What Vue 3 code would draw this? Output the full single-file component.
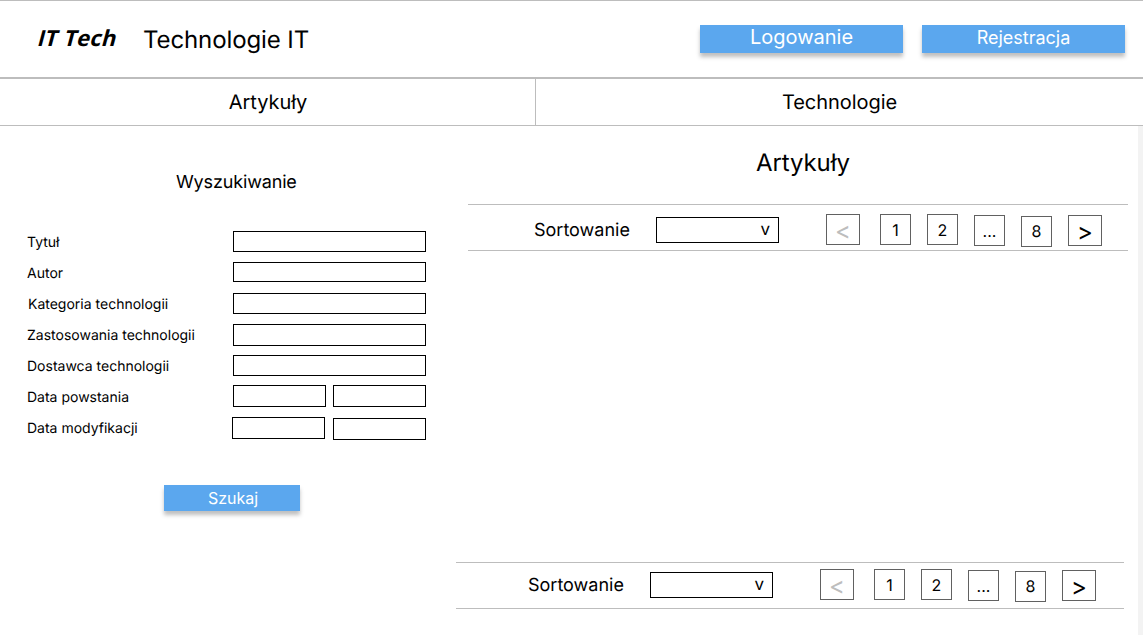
<script setup>
const fields = [
  { label: 'Tytuł', inputs: ['h21'] },
  { label: 'Autor', inputs: ['h20'] },
  { label: 'Kategoria technologii', inputs: ['h21'], indent: true },
  { label: 'Zastosowania technologii', inputs: ['h22'] },
  { label: 'Dostawca technologii', inputs: ['h21'] },
  { label: 'Data powstania', inputs: ['h22 raised', 'h22 raised'] },
  { label: 'Data modyfikacji', inputs: ['h22 wider', 'h22 lowered'] }
]
const pages = [
  { text: '<', kind: 'arrow prev' },
  { text: '1', kind: 'first' },
  { text: '2', kind: 'second' },
  { text: '...', kind: 'dots' },
  { text: '8', kind: 'last' },
  { text: '>', kind: 'arrow next' }
]
const toolbars = ['upper', 'lower']
</script>

<template>
  <div class="page">
    <header class="header">
      <div class="logo"><span class="mark"><span class="plain">I</span>T Tech</span></div>
      <h1 class="title">Technologie IT</h1>
      <button class="btn login"><span>Logowanie</span></button>
      <button class="btn register"><span>Rejestracja</span></button>
    </header>
    <nav class="nav">
      <a class="tab articles">Artykuły</a>
      <a class="tab technologies">Technologie</a>
    </nav>
    <main class="content">
      <aside class="search">
        <h2 class="search-title">Wyszukiwanie</h2>
        <form class="form">
          <div v-for="f in fields" :key="f.label" class="row">
            <label :class="{ indent: f.indent }">{{ f.label }}</label>
            <div class="inputs">
              <div v-for="(c, i) in f.inputs" :key="i" class="input" :class="c"></div>
            </div>
          </div>
        </form>
        <button class="btn submit"><span>Szukaj</span></button>
      </aside>
      <section class="results">
        <h2 class="results-title">Artykuły</h2>
        <div v-for="t in toolbars" :key="t" class="toolbar" :class="t">
          <span class="sort">Sortowanie</span>
          <div class="select"><span>v</span></div>
          <div class="pager">
            <div v-for="p in pages" :key="p.text" class="pg" :class="p.kind"><span>{{ p.text }}</span></div>
          </div>
        </div>
      </section>
      <div class="scroll"></div>
    </main>
  </div>
</template>

<style>
body { margin: 0; background: #fff; overflow: hidden; }
</style>

<style scoped>
* { box-sizing: border-box; }
.page {
  width: 1143px; height: 635px; display: flex; flex-direction: column;
  font-family: Inter, sans-serif; color: #000; overflow: hidden; background: #fff;
  text-rendering: geometricPrecision;
}
h1, h2 { margin: 0; font-weight: 400; }
.header {
  height: 79px; flex: none; display: flex; align-items: flex-start;
  border-top: 1px solid #bdbdbd; border-bottom: 2px solid #bdbdbd; padding-left: 39px;
}
.logo {
  width: 104px; margin-top: 22px; white-space: nowrap;
  font: 700 22px/30px "Open Sans", sans-serif; letter-spacing: .3px;
}
.mark { display: inline-block; transform: skewX(-15deg); }
.plain { font-family: Roboto, sans-serif; line-height: 20px; }
.title { width: 557px; margin-top: 24px; font-size: 24px; line-height: 29px; white-space: nowrap; letter-spacing: -.1px; }
.btn {
  display: flex; justify-content: center; align-items: flex-start; padding: 0; border: 0;
  background: #5ba7ee; color: #fff; font-family: Inter, sans-serif;
  box-shadow: 0 4px 4px rgba(0, 0, 0, .25); white-space: nowrap;
}
.login, .register { width: 203px; height: 28px; margin-top: 24px; }
.login { font-size: 20px; line-height: 24px; margin-right: 19px; }
.register { font-size: 18px; line-height: 26px; }
.nav { height: 47px; flex: none; display: flex; border-bottom: 1px solid #bdbdbd; }
.tab { font-size: 20px; line-height: 46px; text-align: center; letter-spacing: -.05px; }
.articles { width: 536px; border-right: 1px solid #bdbdbd; padding-left: 1px; }
.technologies { width: 607px; }
.content { flex: 1; display: flex; min-height: 0; }
.search { width: 456px; padding-top: 46px; }
.search-title { font-size: 18px; line-height: 22px; padding-left: 176px; letter-spacing: -.15px; }
.form { padding: 37px 0 0 27px; }
.row { display: flex; height: 31px; }
label { width: 205px; font-size: 14px; line-height: 24px; white-space: nowrap; }
.indent { padding-left: 1px; }
.inputs { width: 194px; display: flex; justify-content: flex-end; align-items: flex-start; gap: 7px; }
.input { width: 193px; border: 1px solid #000; }
.input:not(:only-child) { width: 93px; }
.h20 { height: 20px; }
.h21 { height: 21px; }
.h22 { height: 22px; }
.raised { margin-top: -1px; }
.wider { margin-right: 1px; }
.lowered { margin-top: 1px; }
.submit { width: 136px; height: 26px; margin: 37px 0 0 164px; padding-left: 2px; font-size: 16px; line-height: 26px; }
.results { width: 682px; display: flex; flex-direction: column; }
.results-title { font-size: 24px; line-height: 29px; padding: 22px 0 27px 300px; letter-spacing: -.1px; }
.toolbar {
  height: 47px; display: flex; align-items: flex-start;
  border-top: 1px solid #bdbdbd; border-bottom: 1px solid #bdbdbd;
}
.upper { width: 660px; margin-left: 12px; padding: 9px 0 0 66px; }
.lower { width: 668px; margin-top: 311px; padding: 6px 0 0 72px; }
.sort { width: 122px; margin-top: 6px; font-size: 18px; line-height: 22px; }
.select {
  width: 123px; height: 26px; margin-top: 3px; border: 1px solid #000;
  display: flex; justify-content: flex-end; padding-right: 8px; font-size: 17px; line-height: 24px;
}
.pager { display: flex; align-items: flex-start; gap: 16px; margin-left: 47px; }
.pg {
  width: 31px; height: 31px; border: 1px solid #616161;
  display: flex; justify-content: center; font-size: 16px; line-height: 31px;
}
.last { line-height: 29px; }
.arrow { width: 34px; font-size: 24px; line-height: 32px; }
.prev { margin-right: 4px; color: #bdbdbd; }
.dots, .next { margin-top: 1px; }
.last { margin-top: 2px; }
.scroll { width: 5px; background: #f3f3f3; }
</style>
